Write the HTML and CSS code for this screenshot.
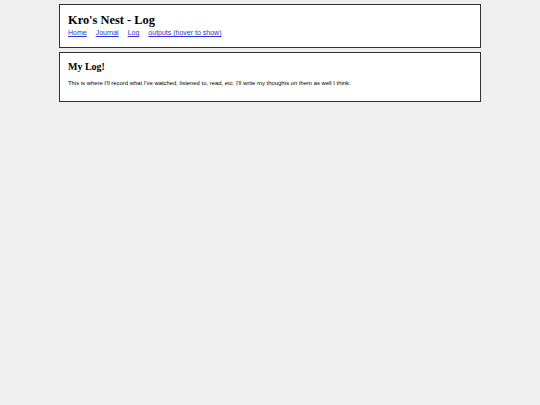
FILE: index.html
```html
<!DOCTYPE html>
<html>
<head>
<meta charset="utf-8">
<title>Kro's Nest - Log</title>
<link rel="stylesheet" href="styles.css">
</head>
<body>
<div class="page">
  <header class="box box-header">
    <h1 class="title">Kro's Nest - Log</h1>
    <nav class="nav">
      <a href="#">Home</a>
      <a href="#">Journal</a>
      <a href="#">Log</a>
      <a href="#">outputs (hover to show)</a>
    </nav>
  </header>
  <main class="box box-main">
    <h2 class="heading">My Log!</h2>
    <p class="text">This is where I'll record what I've watched, listened to, read, etc. I'll write my thoughts on them as well I think.</p>
  </main>
</div>
</body>
</html>
```
FILE: styles.css
```css
html, body {
  margin: 0;
  padding: 0;
  background: #efefef;
}
body {
  font-family: "Liberation Sans", Arial, sans-serif;
  color: #000;
}
.page {
  width: 422px;
  margin: 4px auto 0;
  display: flex;
  flex-direction: column;
  gap: 4px;
}
.box {
  background: #fff;
  border: 1.5px solid #333;
  padding: 0 8px;
}
.box-header {
  padding-top: 8px;
  padding-bottom: 10px;
}
.box-main {
  padding-top: 7.5px;
  padding-bottom: 14px;
}
.title {
  font-family: "Liberation Serif", Georgia, serif;
  font-weight: bold;
  font-size: 12.4px;
  margin: 0;
  line-height: 15px;
}
.nav {
  display: flex;
  gap: 9px;
  font-size: 7px;
  line-height: 8px;
  margin-top: 1px;
}
.nav a {
  color: #3333dd;
}
.heading {
  font-family: "Liberation Serif", Georgia, serif;
  font-weight: bold;
  font-size: 10px;
  margin: 0;
  line-height: 12px;
}
.text {
  font-size: 5.9px;
  line-height: 7px;
  margin: 7px 0 0;
}
```
